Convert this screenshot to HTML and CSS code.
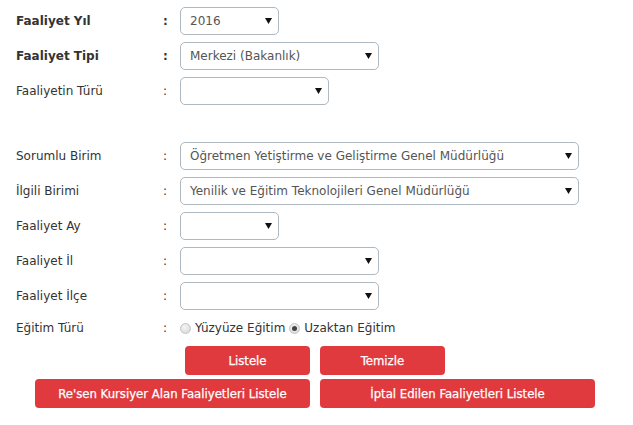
FILE: index.html
```html
<!DOCTYPE html>
<html lang="tr">
<head>
<meta charset="utf-8">
<link rel="stylesheet" href="styles.css">
</head>
<body>
<div class="form">
  <div class="row bold">
    <div class="label">Faaliyet Yıl</div><div class="colon">:</div>
    <div class="field"><div class="select w100"><span>2016</span><svg class="arrow" width="7" height="6" viewBox="0 0 7 6"><path d="M0 0H7L3.5 6Z"/></svg></div></div>
  </div>
  <div class="row bold">
    <div class="label">Faaliyet Tipi</div><div class="colon">:</div>
    <div class="field"><div class="select w200"><span>Merkezi (Bakanlık)</span><svg class="arrow" width="7" height="6" viewBox="0 0 7 6"><path d="M0 0H7L3.5 6Z"/></svg></div></div>
  </div>
  <div class="row">
    <div class="label">Faaliyetin Türü</div><div class="colon">:</div>
    <div class="field"><div class="select w150"><span></span><svg class="arrow" width="7" height="6" viewBox="0 0 7 6"><path d="M0 0H7L3.5 6Z"/></svg></div></div>
  </div>
  <div class="spacer"></div>
  <div class="row">
    <div class="label">Sorumlu Birim</div><div class="colon">:</div>
    <div class="field"><div class="select w400"><span>Öğretmen Yetiştirme ve Geliştirme Genel Müdürlüğü</span><svg class="arrow" width="7" height="6" viewBox="0 0 7 6"><path d="M0 0H7L3.5 6Z"/></svg></div></div>
  </div>
  <div class="row">
    <div class="label">İlgili Birimi</div><div class="colon">:</div>
    <div class="field"><div class="select w400"><span>Yenilik ve Eğitim Teknolojileri Genel Müdürlüğü</span><svg class="arrow" width="7" height="6" viewBox="0 0 7 6"><path d="M0 0H7L3.5 6Z"/></svg></div></div>
  </div>
  <div class="row">
    <div class="label">Faaliyet Ay</div><div class="colon">:</div>
    <div class="field"><div class="select w100"><span></span><svg class="arrow" width="7" height="6" viewBox="0 0 7 6"><path d="M0 0H7L3.5 6Z"/></svg></div></div>
  </div>
  <div class="row">
    <div class="label">Faaliyet İl</div><div class="colon">:</div>
    <div class="field"><div class="select w200"><span></span><svg class="arrow" width="7" height="6" viewBox="0 0 7 6"><path d="M0 0H7L3.5 6Z"/></svg></div></div>
  </div>
  <div class="row">
    <div class="label">Faaliyet İlçe</div><div class="colon">:</div>
    <div class="field"><div class="select w200"><span></span><svg class="arrow" width="7" height="6" viewBox="0 0 7 6"><path d="M0 0H7L3.5 6Z"/></svg></div></div>
  </div>
  <div class="row radio-row">
    <div class="label">Eğitim Türü</div><div class="colon">:</div>
    <div class="field radios">
      <span class="radio"></span><span class="rtext">Yüzyüze Eğitim</span>
      <span class="radio checked"></span><span class="rtext">Uzaktan Eğitim</span>
    </div>
  </div>
  <div class="buttons">
    <div class="left"><button class="btn small">Listele</button></div>
    <div class="right"><button class="btn small">Temizle</button></div>
    <div class="left"><button class="btn wide">Re'sen Kursiyer Alan Faaliyetleri Listele</button></div>
    <div class="right"><button class="btn wide">İptal Edilen Faaliyetleri Listele</button></div>
  </div>
</div>
</body>
</html>
```

FILE: styles.css
```css
html, body {
  margin: 0;
  padding: 0;
  background: #ffffff;
}
body {
  font-family: "DejaVu Sans", Verdana, sans-serif;
  font-size: 12px;
  color: #333333;
}
.form {
  padding: 3px 0 0 16px;
}
.row {
  display: grid;
  grid-template-columns: 145px 19px auto;
  align-items: center;
  height: 35px;
}
.row.bold .label,
.row.bold .colon {
  font-weight: bold;
}
.colon {
  padding-left: 2px;
}
.spacer {
  height: 30px;
}
.select {
  box-sizing: border-box;
  height: 28px;
  border: 1px solid #aeb8c0;
  border-radius: 5px;
  background: #fff;
  display: flex;
  align-items: center;
  justify-content: space-between;
  padding: 0 6px 0 9px;
  color: #555555;
  font-size: 12px;
  font-weight: normal;
}
.w100 { width: 99px; }
.w150 { width: 149px; }
.w200 { width: 199px; }
.w400 { width: 399px; }
.arrow {
  fill: #111;
  flex: none;
}
.radio-row {
  height: 30px;
}
.radios {
  display: flex;
  align-items: center;
}
.radio {
  box-sizing: border-box;
  width: 11px;
  height: 11px;
  border-radius: 50%;
  border: 1px solid #c4c4c4;
  background: radial-gradient(circle at 40% 35%, #f4f4f4, #d6d6d6);
  margin-right: 4px;
  display: inline-flex;
  align-items: center;
  justify-content: center;
}
.radio.checked::after {
  content: "";
  width: 5px;
  height: 5px;
  border-radius: 50%;
  background: #444;
}
.rtext {
  margin-right: 4px;
  color: #333;
}
.buttons {
  display: grid;
  grid-template-columns: 294px auto;
  column-gap: 10px;
  row-gap: 4px;
  margin-top: 3px;
}
.left {
  display: flex;
  justify-content: flex-end;
}
.right {
  display: flex;
  justify-content: flex-start;
}
.btn {
  height: 29px;
  border: none;
  border-radius: 4px;
  background: #e03a3e;
  color: #fff;
  font-family: "DejaVu Sans Condensed", "DejaVu Sans", sans-serif;
  font-size: 13px;
  font-weight: normal;
  -webkit-text-stroke: 0.25px #fff;
  padding: 0;
}
.btn.small { width: 125px; }
.btn.wide { width: 275px; }
```
